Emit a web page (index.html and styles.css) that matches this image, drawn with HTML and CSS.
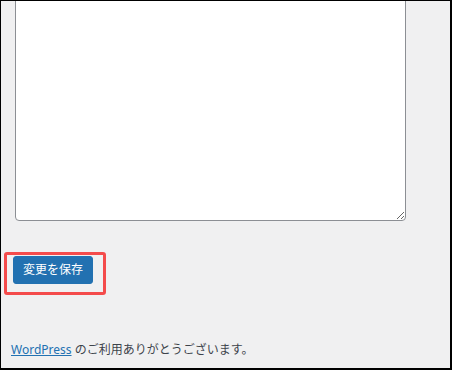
FILE: index.html
```html
<!DOCTYPE html>
<html lang="ja">
<head>
  <meta charset="UTF-8">
  <meta name="viewport" content="width=device-width, initial-scale=1.0">
  <title>テーマファイルエディター</title>
  <link rel="stylesheet" href="styles.css">
</head>
<body>
  <div class="frame">
    <form class="editor-form">
      <textarea class="code-area" name="newcontent" spellcheck="false"></textarea>
      <div class="actions">
        <span class="highlight"></span>
        <button type="submit" class="button-primary">変更を保存</button>
      </div>
    </form>
    <p class="footer-thanks"><a href="#">WordPress</a> のご利用ありがとうございます。</p>
  </div>
</body>
</html>
```

FILE: styles.css
```css
/* Base */
body {
  margin: 0;
  font-family: "Noto Sans", "Noto Sans CJK JP", sans-serif;
  background-color: #f0f0f1;
  color: #3c434a;
}

/* Screenshot frame */
.frame {
  box-sizing: border-box;
  height: 370px;
  border-style: solid;
  border-color: #000;
  border-width: 1px 2px 2px 1px;
  background-color: #f0f0f1;
  overflow: hidden;
}

.editor-form {
  margin: 0;
}

/* Editor */
.code-area {
  display: block;
  box-sizing: border-box;
  width: 391px;
  height: 260px;
  margin: -40px 0 0 14px;
  border: 1px solid #8c8f94;
  border-radius: 4px;
  background-color: #fff;
  resize: vertical;
}

/* Save button */
.actions {
  position: relative;
  margin-top: 35px;
  padding-left: 12px;
}

.button-primary {
  box-sizing: border-box;
  height: 28px;
  padding: 0 9px;
  font-family: inherit;
  font-size: 12px;
  line-height: 26px;
  color: #fff;
  background-color: #2271b1;
  border: 1px solid #2271b1;
  border-radius: 3px;
  cursor: pointer;
}

/* Red annotation box */
.highlight {
  position: absolute;
  left: 3px;
  top: -4px;
  box-sizing: border-box;
  width: 102px;
  height: 43px;
  border: 3px solid #f44b4b;
  border-radius: 3px;
}

/* Footer */
.footer-thanks {
  margin: 56px 0 0;
  padding-left: 10px;
  font-size: 12px;
  line-height: 20px;
  color: #3c434a;
}

.footer-thanks a {
  color: #2271b1;
  text-decoration: underline;
}
```
